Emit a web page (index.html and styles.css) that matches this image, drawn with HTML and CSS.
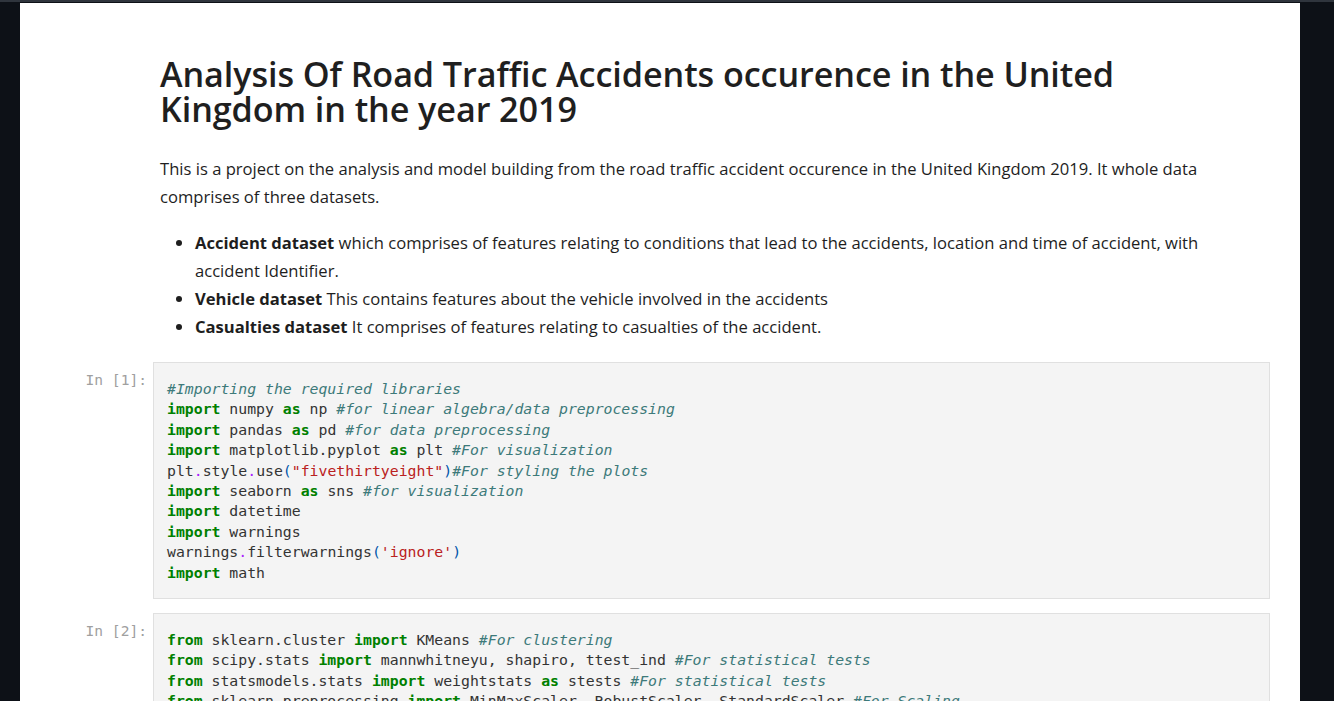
FILE: index.html
```html
<!DOCTYPE html>
<html>
<head>
<meta charset="utf-8">
<link rel="stylesheet" href="styles.css">
</head>
<body>
<div class="topbar"></div>
<div class="page">
  <div class="cell md">
    <div class="prompt"></div>
    <div class="content">
      <h1>Analysis Of Road Traffic Accidents occurence in the United Kingdom in the year 2019</h1>
      <p>This is a project on the analysis and model building from the road traffic accident occurence in the United Kingdom 2019. It whole data comprises of three datasets.</p>
      <ul>
        <li><b>Accident dataset</b> which comprises of features relating to conditions that lead to the accidents, location and time of accident, with accident Identifier.</li>
        <li><b>Vehicle dataset</b> This contains features about the vehicle involved in the accidents</li>
        <li><b>Casualties dataset</b> It comprises of features relating to casualties of the accident.</li>
      </ul>
    </div>
  </div>
  <div class="cell code">
    <div class="prompt">In&nbsp;[1]:</div>
    <div class="input"><pre><span class="c">#Importing the required libraries</span>
<span class="k">import</span> numpy <span class="k">as</span> np <span class="c">#for linear algebra/data preprocessing</span>
<span class="k">import</span> pandas <span class="k">as</span> pd <span class="c">#for data preprocessing</span>
<span class="k">import</span> matplotlib.pyplot <span class="k">as</span> plt <span class="c">#For visualization</span>
plt<span class="o">.</span>style<span class="o">.</span>use<span class="p">(</span><span class="s">"fivethirtyeight"</span><span class="p">)</span><span class="c">#For styling the plots</span>
<span class="k">import</span> seaborn <span class="k">as</span> sns <span class="c">#for visualization</span>
<span class="k">import</span> datetime
<span class="k">import</span> warnings
warnings<span class="o">.</span>filterwarnings<span class="p">(</span><span class="s">'ignore'</span><span class="p">)</span>
<span class="k">import</span> math</pre></div>
  </div>
  <div class="cell code">
    <div class="prompt">In&nbsp;[2]:</div>
    <div class="input"><pre><span class="k">from</span> sklearn.cluster <span class="k">import</span> KMeans <span class="c">#For clustering</span>
<span class="k">from</span> scipy.stats <span class="k">import</span> mannwhitneyu, shapiro, ttest_ind <span class="c">#For statistical tests</span>
<span class="k">from</span> statsmodels.stats <span class="k">import</span> weightstats <span class="k">as</span> stests <span class="c">#For statistical tests</span>
<span class="k">from</span> sklearn.preprocessing <span class="k">import</span> MinMaxScaler, RobustScaler, StandardScaler <span class="c">#For Scaling</span>
<span class="k">from</span> sklearn.decomposition <span class="k">import</span> PCA <span class="c">#For dimensionality reduction</span></pre></div>
  </div>
</div>
</body>
</html>
```

FILE: styles.css
```css
html, body {
  margin: 0;
  padding: 0;
  background: #0d1117;
  height: 701px;
  overflow: hidden;
}
.topbar {
  height: 2px;
  background: #2f353d;
  border-bottom: 1px solid #0d1117;
}
.page {
  margin: 0 34px 0 20px;
  background: #ffffff;
  padding: 53px 30px 0 0;
  min-height: 800px;
  font-family: "Open Sans", "Noto Sans", sans-serif;
  color: #1e1e1e;
}
.cell {
  display: flex;
  align-items: flex-start;
}
.prompt {
  width: 127px;
  flex: 0 0 127px;
  padding-right: 6px;
  text-align: right;
  font-family: "DejaVu Sans Mono", monospace;
  font-size: 14.6px;
  color: #a0a0a0;
  line-height: 20px;
  padding-top: 8px;
}
.content {
  flex: 1;
  padding-left: 7px;
  padding-right: 22px;
}
h1 {
  font-size: 34.2px;
  font-weight: 600;
  line-height: 35px;
  margin: 0 0 29px 0;
  color: #1f1f1f;
  letter-spacing: -0.1px;
}
p, li {
  font-size: 16.6px;
  line-height: 28px;
}
p {
  margin: 0 0 18px 0;
}
ul {
  margin: 0 0 21px 0;
  padding-left: 35px;
}
b {
  font-weight: 700;
}
.code {
  margin-bottom: 14px;
}
.input {
  flex: 1;
  background: #f4f4f4;
  border: 1px solid #e0e0e0;
  padding: 16px 13px 15px;
}
pre {
  margin: 0;
  font-family: "DejaVu Sans Mono", monospace;
  font-size: 14.8px;
  line-height: 20.4px;
  color: #333;
}
.k { color: #008000; font-weight: bold; }
.c { color: #3d7a7a; font-style: italic; }
.s { color: #ba2121; }
.o { color: #aa22ff; }
.p { color: #0055aa; }
```
